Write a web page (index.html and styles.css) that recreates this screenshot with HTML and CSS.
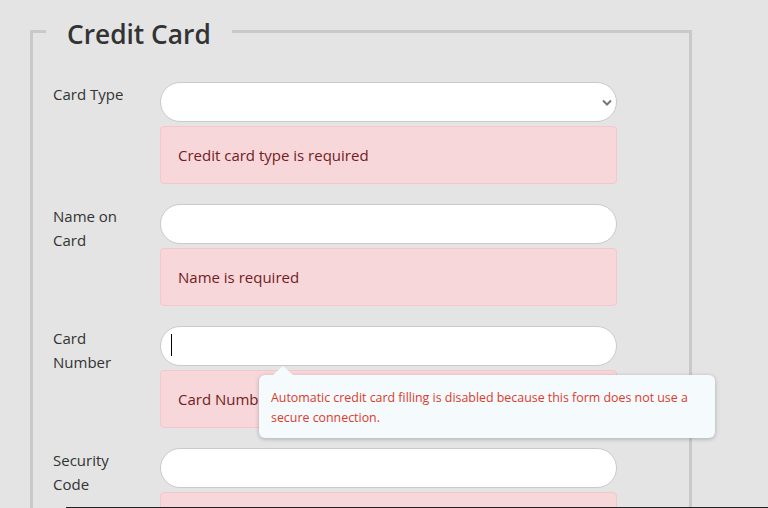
FILE: index.html
```html
<!DOCTYPE html>
<html>
<head>
<meta charset="utf-8">
<link rel="stylesheet" href="styles.css">
</head>
<body>
<form class="page">
  <fieldset class="card-set">
    <legend class="card-legend">Credit Card</legend>
    <div class="row">
      <label class="lbl">Card Type</label>
      <div class="field">
        <select class="ctl sel"><option></option></select>
        <div class="alert">Credit card type is required</div>
      </div>
    </div>
    <div class="row">
      <label class="lbl">Name on Card</label>
      <div class="field">
        <input class="ctl" type="text">
        <div class="alert">Name is required</div>
      </div>
    </div>
    <div class="row">
      <label class="lbl">Card Number</label>
      <div class="field">
        <div class="ctl-wrap">
          <input class="ctl" type="text">
          <span class="caret"></span>
        </div>
        <div class="alert">Card Number is required</div>
        <div class="tip">Automatic credit card filling is disabled because this form does not use a secure connection.</div>
      </div>
    </div>
    <div class="row">
      <label class="lbl">Security Code</label>
      <div class="field">
        <input class="ctl" type="text">
        <div class="alert">Security code is required</div>
      </div>
    </div>
  </fieldset>
</form>
<div class="bottom-line"></div>
</body>
</html>
```
FILE: styles.css
```css
html, body {
  margin: 0;
  padding: 0;
  height: 508px;
  overflow: hidden;
  background: #e4e4e4;
  font-family: "Segoe UI", "Open Sans", "Noto Sans", sans-serif;
  color: #333;
}
.page {
  padding: 11px 0 0 30px;
}
.card-set {
  width: 564px;
  margin: 0;
  border: 3px solid #c9c9c9;
  padding: 31px 72px 0 20px;
  box-sizing: content-box;
}
.card-legend {
  font-size: 26.3px;
  font-weight: 600;
  line-height: 34px;
  padding: 6px 21px 0;
  margin-left: -7px;
  color: #333;
}
.row {
  display: flex;
  margin-bottom: 20px;
}
.lbl {
  width: 107px;
  flex: none;
  font-size: 15px;
  line-height: 24px;
  padding-top: 0;
  padding-right: 20px;
  box-sizing: border-box;
}
.field {
  width: 457px;
  position: relative;
}
.ctl-wrap {
  position: relative;
}
.ctl {
  display: block;
  width: 100%;
  height: 40px;
  box-sizing: border-box;
  border: 1px solid #cacaca;
  border-radius: 20px;
  background: #fff;
  font: inherit;
  padding: 0 12px;
  outline: none;
  margin: 0;
}
.sel {
  appearance: none;
  -webkit-appearance: none;
  background: #fff url("data:image/svg+xml,%3Csvg xmlns='http://www.w3.org/2000/svg' width='10' height='7' viewBox='0 0 10 7'%3E%3Cpath d='M1 1.5 L5 5.5 L9 1.5' fill='none' stroke='%23777' stroke-width='2'/%3E%3C/svg%3E") no-repeat right 4px center;
}
.caret {
  position: absolute;
  left: 11px;
  top: 8px;
  width: 1px;
  height: 22px;
  background: #000;
}
.alert {
  margin-top: 4px;
  background: #f8d7da;
  border: 1px solid #f5c6cb;
  border-radius: 4px;
  color: #721c24;
  font-size: 15px;
  line-height: 24px;
  padding: 16px 17px;
}
.tip {
  position: absolute;
  left: 99px;
  top: 49px;
  width: 456px;
  height: 63px;
  box-sizing: border-box;
  padding: 13px 12px 10px;
  background: #f5fafd;
  border-radius: 6px;
  box-shadow: 0 1px 4px rgba(0,0,0,0.25);
  color: #dc3b2c;
  font-size: 12.4px;
  line-height: 20px;
}
.tip::before {
  content: "";
  position: absolute;
  left: 14px;
  top: -9px;
  border-left: 10px solid transparent;
  border-right: 10px solid transparent;
  border-bottom: 9px solid #f5fafd;
}
.bottom-line {
  position: fixed;
  left: 66px;
  right: 0;
  bottom: 0;
  height: 1px;
  background: #222;
}
```
